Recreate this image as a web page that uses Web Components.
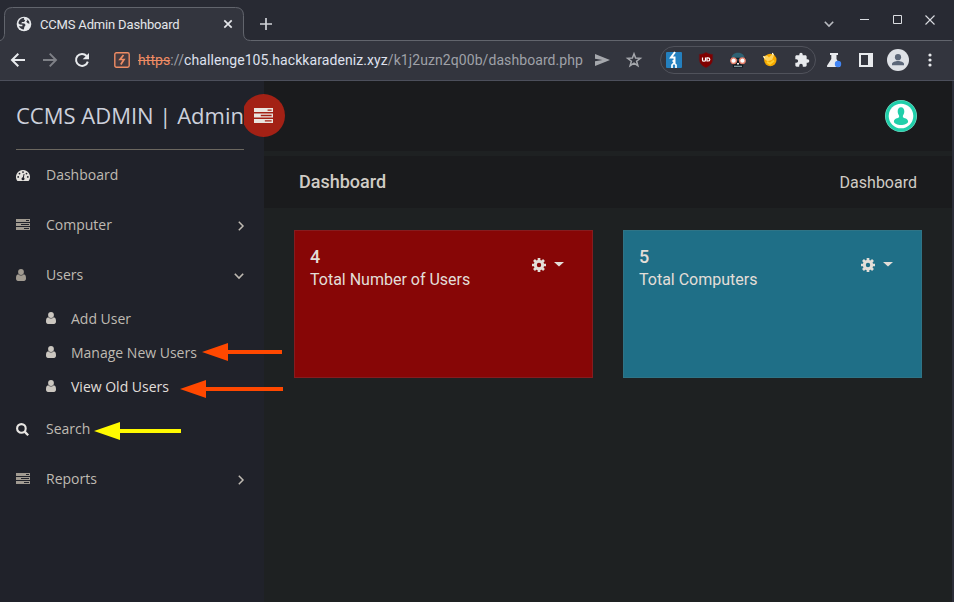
<!DOCTYPE html>
<html lang="en">
<head>
<meta charset="utf-8">
<title>CCMS Admin Dashboard</title>
<style>
html,body{margin:0;height:100%;overflow:hidden;background:#1e2122}
</style>
</head>
<body>
<app-window></app-window>
<script>
function define(name, render) {
  customElements.define(name, class extends HTMLElement {
    connectedCallback() {
      if (this.shadowRoot) return;
      this.attachShadow({mode: 'open'}).innerHTML = render(this);
    }
  });
}

const bars = '<path fill-rule="evenodd" d="M0 0h14v3H0zM10 1v1h3V1zM0 4h14v3H0zM5 5v1h8V5zM0 8h14v3H0zM8 9v1h5V9z"/>';
const icons = {
  globe: ['0 0 16 16', '<circle cx="8" cy="8" r="7.3" fill="#e8eaed"/><path fill="#33353e" d="M6.1 2.2 8.3 1.7 7.7 3.2 9.2 4.3 8.1 6H6.1L5.2 7.2 8.4 7.5 9.6 9.1 8.3 11 7.9 13.5C5.7 13.4 3.8 12.2 2.8 10.3H6.4V8.7L3.9 8.5 2.4 7.3C2.6 5 4 3.1 6.1 2.2M10.4 2.7 13 5.2 13.5 7.7 11.8 7.2 10.2 5.8 11.4 4.3z"/>'],
  close: ['0 0 10 10', '<path d="m1.3 1.3 7.4 7.4m0-7.4L1.3 8.7" fill="none" stroke="currentColor" stroke-width="1.7"/>'],
  plus: ['0 0 12 12', '<path d="M6 0v12M0 6h12" stroke="currentColor" stroke-width="1.7"/>'],
  down: ['0 0 10 6', '<path d="m.8.8 4.2 4.2L9.2.8" fill="none" stroke="currentColor" stroke-width="1.6"/>'],
  right: ['0 0 6 10', '<path d="m.8.8 4.2 4.2L.8 9.2" fill="none" stroke="currentColor" stroke-width="1.5"/>'],
  min: ['0 0 9 9', '<path d="M0 4.5h9" stroke="currentColor"/>'],
  max: ['0 0 9 9', '<path d="M.5.5h8v8h-8z" fill="none" stroke="currentColor"/>'],
  shut: ['0 0 10 10', '<path d="m.5.5 9 9m0-9-9 9" stroke="currentColor" stroke-width="1.1"/>'],
  back: ['0 0 16 16', '<path d="M15 8H2.4M8.3 1.7 2 8l6.3 6.3" fill="none" stroke="currentColor" stroke-width="2"/>'],
  forward: ['0 0 16 16', '<path d="M1 8h12.6M7.7 1.7 14 8l-6.3 6.3" fill="none" stroke="currentColor" stroke-width="1.9"/>'],
  reload: ['0 0 16 16', '<path d="M13.8 9.6A6 6 0 1 1 12.6 4" fill="none" stroke="currentColor" stroke-width="2"/><path d="M15 1v6.3H8.7z" fill="currentColor"/>'],
  spark: ['0 0 16 16', '<rect x=".8" y=".8" width="14.4" height="14.4" rx="1.6" fill="#453b40" stroke="#ef8c64" stroke-width="1.4"/><path d="M9.500 3 6 7.500h4L6.800 12.500" fill="none" stroke="#ef8c64" stroke-width="1.700"/>'],
  send: ['0 0 15 12', '<path fill="currentColor" d="M0 0 15 6 0 12V7.2L7.5 6 0 4.8z"/>'],
  star: ['0 0 16 16', '<path d="m8 1.8 1.6 4.3 4.7.2-3.7 2.9 1.3 4.5L8 11.2l-3.9 2.5 1.3-4.5-3.7-2.9 4.7-.2z" fill="none" stroke="currentColor" stroke-width="1.5"/>'],
  wappa: ['0 0 16 16', '<rect width="16" height="16" rx="1" fill="#2480bf"/><path d="M9 0 5 5.500h3.500V11M6.500 9H9" fill="none" stroke="#fff" stroke-width="2"/><path d="M6 16v-3l2-2 2 2v3" fill="none" stroke="#fff" stroke-width="1.700"/>'],
  shield: ['0 0 16 16', '<path d="M8 .3c2.3 1.5 4.4 2 6.700 2v5c0 4.300-3.200 6.800-6.700 8.500C4.500 14.100 1.300 11.600 1.300 7.300v-5c2.300 0 4.400-.5 6.700-2z" fill="#800000" stroke="#5b1c25" stroke-width=".5"/><path d="M4.500 5.500v2.700q0 1 1.500 1t1.500-1V5.500m1.500.3v3.200h1q1.800 0 1.800-1.600T10 5.800z" fill="none" stroke="#fff" stroke-width="1.200"/>'],
  robot: ['0 0 16 16', '<path d="M1.200 7.500C1.200 3.300 4 .8 8 .8s6.800 2.500 6.800 6.700z" fill="#2d6173"/><path d="M2.500 9h11l-.5 6.500H3z" fill="#111920"/><path d="M4 14.300h8" stroke="#91a7ad" stroke-width="1.200"/><path d="M0 6.500h16" stroke="#121a22" stroke-width="1.500"/><g fill="#fff" stroke="#e8806b" stroke-width="1.300"><circle cx="3.600" cy="8.700" r="2.800"/><circle cx="12.400" cy="8.700" r="2.800"/></g><path d="M7 11h2v1.500H7z" fill="#eee"/>'],
  cookie: ['0 0 16 16', '<circle cx="8.300" cy="8" r="6.200" fill="#f6a800"/><path d="m1 4.200 4-.7 2 2 3-3 .8-2 1.300 2.500-2 5-4.500 1.200-3-2z" fill="#ffd35c"/><path d="m5 9.800 3 2 4-3.300" fill="none" stroke="#ffd02f" stroke-width="2"/><path d="m1.500 4.500 1.300 1.800M10.300 1l.8 1.800" stroke="#fff" stroke-width="1"/>'],
  puzzle: ['0 0 24 24', '<path fill="currentColor" d="M20.500 11H19V7c0-1.100-.9-2-2-2h-4V3.500a2.500 2.500 0 0 0-5 0V5H4c-1.100 0-2 .9-2 2v3.800h1.500a2.700 2.700 0 0 1 0 5.400H2V20c0 1.100.9 2 2 2h3.800v-1.500a2.700 2.700 0 0 1 5.400 0V22H17c1.100 0 2-.9 2-2v-4h1.500a2.500 2.500 0 0 0 0-5z"/>'],
  flask: ['0 0 16 16', '<path fill="#e8eaed" d="M4 1h8v2h-1.500v4L14 13.500c.5 1-.2 1.500-1 1.500H2c-1 0-1.300-.8-.9-1.600L5.300 7V3H4z"/><circle cx="12" cy="12" r="3.200" fill="#4285f4"/>'],
  panel: ['0 0 14 14', '<path fill="currentColor" fill-rule="evenodd" d="M0 0h14v14H0zM2 2v10h7V2z"/>'],
  person: ['0 0 22 22', '<circle cx="11" cy="11" r="11" fill="#dee1e6"/><circle cx="11" cy="8.200" r="3.100" fill="#5c6779"/><path fill="#5c6779" d="M5 16.300v-1.200C5 13 8.500 12 11 12s6 1 6 3.100v1.200z"/>'],
  dots: ['0 0 4 14', '<g fill="currentColor"><circle cx="2" cy="2" r="1.600"/><circle cx="2" cy="7" r="1.600"/><circle cx="2" cy="12" r="1.600"/></g>'],
  bars: ['0 0 14 11', '<g fill="currentColor">' + bars + '</g>'],
  gauge: ['0 0 14 11', '<path fill="currentColor" d="M7 0a7 7 0 0 0-6 10.600q.2.400.6.400h10.800q.4 0 .6-.4A7 7 0 0 0 7 0"/><g fill="#20222a"><circle cx="2.200" cy="6.900" r=".9"/><circle cx="3.500" cy="3.600" r=".9"/><circle cx="7" cy="2.100" r=".9"/><circle cx="10.500" cy="3.600" r=".9"/><circle cx="11.800" cy="6.900" r=".9"/><circle cx="7" cy="8.700" r="1.500"/><path d="m7.600 3.900.9.200-.9 4.600-1-.2z"/></g>'],
  user: ['0 0 10 12', '<g fill="currentColor"><circle cx="5" cy="3" r="2.900"/><path d="M2.200 5.300C3.700 6.900 6.300 6.900 7.800 5.300 9.500 5.400 10 7.200 10 9.500 10 11 9.200 12 8 12H2C.8 12 0 11 0 9.500 0 7.200.5 5.400 2.200 5.300"/></g>'],
  search: ['0 0 13 13', '<circle cx="5.400" cy="5.400" r="4.300" fill="none" stroke="currentColor" stroke-width="2.100"/><path d="m8.600 8.600 3.600 3.600" stroke="currentColor" stroke-width="2.300"/>'],
  gear: ['0 0 14 14', '<g fill="none" stroke="currentColor"><circle cx="7" cy="7" r="3.700" stroke-width="3"/><path stroke-width="2.700" d="M7 0v3M7 11v3M0 7h3m8 0h3M2 2l2 2m6 6 2 2M2 12l2-2m6-6 2-2"/></g>'],
  caret: ['0 0 10 5', '<path d="M0 0h10L5 4.600z" fill="currentColor"/>'],
  avatar: ['0 0 32 32', '<circle cx="16" cy="16" r="16" fill="#7fdcc6"/><circle cx="16" cy="16" r="15.400" fill="#20cfaa"/><circle cx="16" cy="16" r="12.300" fill="#fff"/><path fill="#20cfaa" d="M16 7.200c2.200 0 3.300 1.700 3.300 4.100 0 2-.7 3.400-1.400 4.500v1.500c1 1 5.200 1.200 5.200 4.200 0 2.100-3.700 3.600-7.100 3.600s-7.100-1.500-7.100-3.600c0-3 4.200-3.200 5.200-4.200v-1.500c-.7-1.100-1.400-2.500-1.400-4.500 0-2.400 1.100-4.100 3.300-4.100"/>']
};

define('ui-icon', el => {
  const [box, body] = icons[el.getAttribute('name')];
  const [, , w, h] = box.split(' ');
  const width = el.getAttribute('w') || w, height = el.getAttribute('h') || (el.hasAttribute('w') ? width : h);
  return `<style>:host{display:flex;flex:none;align-items:center;justify-content:center}svg{display:block;overflow:visible}</style>
  <svg width="${width}" height="${height}" viewBox="${box}">${body}</svg>`;
});

define('tab-strip', () => `<style>
:host{display:flex;position:relative;box-sizing:border-box;height:41px;background:#282a33;color:#e4e6ea;font:13px Roboto,sans-serif}
.edge{position:absolute;left:0;top:0}
.tab{position:relative;display:flex;align-items:center;box-sizing:border-box;width:244px;padding:7px 11px 0 16px;height:41px}
.tab span{margin-left:8px;flex:1;letter-spacing:-.17px;white-space:nowrap}
.new{margin-left:16px;padding-top:7px;color:#cfd2d8}
.controls{margin-left:auto;display:flex;align-items:center;padding-right:19px;height:39px;color:#dadce1}
.controls :nth-child(1){margin:8px 26px 0 0;color:#b9bbc1}.controls :nth-child(2){margin-right:24px}.controls :nth-child(3){margin-right:23px}
</style>
<svg class="edge" width="954" height="41"><path d="M0 40.500C3 40 4.500 37 4.500 33V15.500q0-8 8-8h223q8 0 8 8V33q0 7.500 7 7.500H952V42H0z" fill="#33353e" stroke="#62656d"/></svg>
<div class="tab"><ui-icon name="globe"></ui-icon><span>CCMS Admin Dashboard</span><ui-icon name="close"></ui-icon></div>
<ui-icon class="new" name="plus"></ui-icon>
<div class="controls"><ui-icon name="down"></ui-icon><ui-icon name="min"></ui-icon><ui-icon name="max"></ui-icon><ui-icon name="shut"></ui-icon></div>`);

define('address-bar', () => `<style>
:host{display:flex;align-items:center;box-sizing:border-box;height:40px;padding:0 8px 1px 2px;background:#33353e;border-bottom:1px solid #4c4f5b;color:#e8eaed;font:14px Roboto,sans-serif}
ui-icon{width:32px;height:32px}
.off{color:#7f8187}.soft{color:#a6a8ad}
.site{margin-left:7px;margin-right:-1px;width:34px}
.url{width:448px;white-space:nowrap;color:#9fa1a8;font-size:14px;letter-spacing:.08px}
.url s{color:#ef8c64}.url b{font-weight:400;color:#dfe1ee}
.ext{display:flex;align-items:center;box-sizing:border-box;width:156px;height:28px;margin-left:10px;margin-right:2px;border:1px solid #50525b;border-radius:14px}
.ext ui-icon{margin-left:-3px;margin-right:3px}
</style>
<ui-icon name="back"></ui-icon><ui-icon class="off" name="forward"></ui-icon><ui-icon name="reload"></ui-icon>
<ui-icon class="site" name="spark"></ui-icon>
<div class="url"><s>https</s>://<b>challenge105.hackkaradeniz.xyz</b>/k1j2uzn2q00b/dashboard.php</div>
<ui-icon class="soft" name="send"></ui-icon><ui-icon class="soft" name="star"></ui-icon>
<div class="ext"><ui-icon name="wappa"></ui-icon><ui-icon name="shield"></ui-icon><ui-icon name="robot"></ui-icon><ui-icon name="cookie"></ui-icon><ui-icon name="puzzle" w="16"></ui-icon></div>
<ui-icon name="flask"></ui-icon><ui-icon name="panel"></ui-icon><ui-icon name="person"></ui-icon><ui-icon name="dots"></ui-icon>`);

define('nav-item', el => `<style>
:host{display:flex;align-items:center;height:50px;padding:0 20px 0 16px;color:#bfbab2;font:14px "Open Sans",sans-serif}
:host([sub]){height:34px;padding-left:46px}
:host([bright]){color:#e1dfdb}
.glyph{width:30px;justify-content:flex-start;color:${el.getAttribute('tint') || '#a19b91'}}
:host([sub]) .glyph{width:25px;padding-bottom:2px}
.glyph[name=bars]{padding-bottom:1px}
.text{flex:1;white-space:nowrap;padding-bottom:2px}
.arrow{padding-top:1px}
</style><ui-icon class="glyph" name="${el.getAttribute('icon')}"></ui-icon><span class="text"><slot></slot></span>
${el.hasAttribute('arrow') ? `<ui-icon class="arrow" name="${el.getAttribute('arrow')}"></ui-icon>` : ''}`);

define('side-nav', () => `<style>
:host{display:block;width:264px;background:#20222a}
h1{box-sizing:border-box;height:69px;margin:0 20px 0 16px;border-bottom:1px solid #6b675f;color:#ccd0db;font:22px/68px "Open Sans",sans-serif;white-space:nowrap;overflow:hidden}
.sub{padding:2px 0 0}
</style>
<h1>CCMS ADMIN | Admin</h1>
<nav>
<nav-item icon="gauge" tint="#e3e1dd">Dashboard</nav-item>
<nav-item icon="bars" arrow="right">Computer</nav-item>
<nav-item icon="user" arrow="down">Users</nav-item>
<div class="sub"><nav-item sub icon="user" tint="#cbc7c0">Add User</nav-item><nav-item sub icon="user" tint="#cbc7c0">Manage New Users</nav-item><nav-item sub bright icon="user" tint="#cbc7c0">View Old Users</nav-item></div>
<nav-item icon="search" tint="#e8e6e3">Search</nav-item>
<nav-item icon="bars" arrow="right">Reports</nav-item>
</nav>`);

define('stat-card', el => `<style>
:host{display:flex;justify-content:space-between;box-sizing:border-box;height:148px;padding:15px 28px 0 15px;border:1px solid ${el.getAttribute('edge')};background:${el.getAttribute('fill')};color:#e3ded8;font:16px/24px Roboto,sans-serif}
.num{font-size:18px;font-weight:500;line-height:22px}.label{line-height:23px}
.tools{display:flex;gap:8px;height:38px;align-items:center}.tools :last-child{margin-top:-1px}
</style><div><div class="num">${el.getAttribute('value')}</div><div class="label"><slot></slot></div></div>
<div class="tools"><ui-icon name="gear"></ui-icon><ui-icon name="caret"></ui-icon></div>`);

define('dash-main', () => `<style>
:host{display:block;flex:1;background:#1e2122;color:#d0ccc5;font:16px Roboto,sans-serif}
header{display:flex;justify-content:flex-end;align-items:center;height:70px;padding-right:35px;background:#1a1b1d}
.title{display:flex;justify-content:space-between;align-items:center;height:52px;margin-top:5px;padding:0 35px;background:#1a1b1d}
h2{margin:0;padding-bottom:2px;font-size:18px;font-weight:500}
.cards{display:grid;grid-template-columns:1fr 1fr;gap:30px;padding:22px 30px}
</style>
<header><ui-icon name="avatar"></ui-icon></header>
<div class="title"><h2>Dashboard</h2><span>Dashboard</span></div>
<div class="cards"><stat-card value="4" fill="#870606" edge="#861c1f">Total Number of Users</stat-card><stat-card value="5" fill="#1f6f87" edge="#2f7486">Total Computers</stat-card></div>`);

define('menu-toggle', () => `<style>
:host{position:absolute;left:244px;top:94px;width:41px;height:43px;overflow:hidden;color:#e9e5df}
div{display:flex;align-items:center;justify-content:center;width:43px;height:43px;margin-left:-2px;border-radius:50%;background:#a32115}
ui-icon{margin-right:1px}
</style><div><ui-icon name="bars" w="19" h="15"></ui-icon></div>`);

define('note-arrow', el => {
  const w = +el.getAttribute('length');
  return `<style>:host{position:absolute;left:${el.getAttribute('x')}px;top:${el.getAttribute('y')}px}svg{display:block}</style>
  <svg width="${w}" height="18"><path fill="${el.getAttribute('fill')}" d="M0 9 26 0v7H${w}v4H26v7z"/></svg>`;
});

define('app-window', () => `<style>
:host{display:flex;flex-direction:column;position:relative;width:954px;height:602px;overflow:hidden}
.page{display:flex;flex:1;border-right:2px solid #2b2d38}
</style>
<tab-strip></tab-strip><address-bar></address-bar>
<div class="page"><side-nav></side-nav><dash-main></dash-main></div>
<menu-toggle></menu-toggle>
<note-arrow x="202" y="343" length="80" fill="#ff4800"></note-arrow>
<note-arrow x="180" y="380" length="103" fill="#ff4800"></note-arrow>
<note-arrow x="94" y="422" length="87" fill="#fffa00"></note-arrow>`);
</script>
</body>
</html>
